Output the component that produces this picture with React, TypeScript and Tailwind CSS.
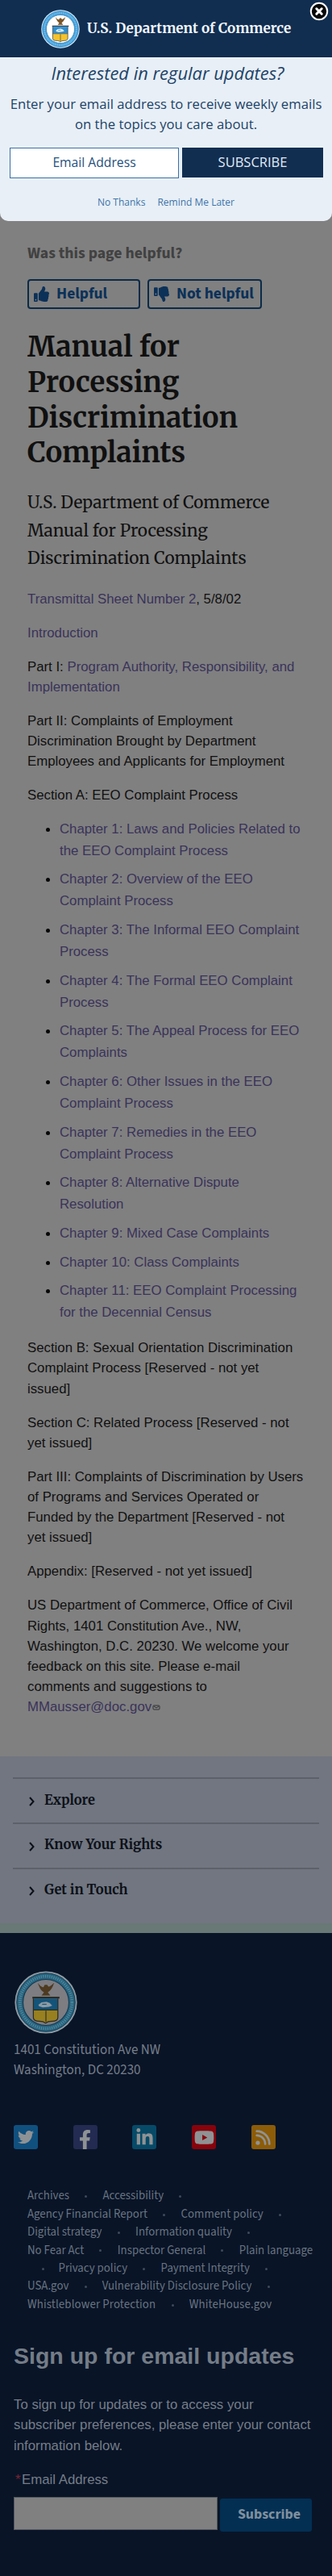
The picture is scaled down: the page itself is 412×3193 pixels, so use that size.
import type { ReactNode } from "react";
import { FaFacebookF, FaThumbsDown, FaThumbsUp, FaTwitter } from "react-icons/fa";
import { FaLinkedinIn, FaRss, FaYoutube } from "react-icons/fa6";

function Seal({ className, dim = false }: { className: string; dim?: boolean }) {
  const paper = dim ? "#7d7d82" : "#ffffff";
  const ring = dim ? "#26647f" : "#3f9fdc";
  const rim = dim ? "#8f9ba3" : "#d8effb";
  const line = dim ? "#14384f" : "#2474ad";
  const letters = dim ? "#76a3b4" : "#c3e6f8";
  const bird = dim ? "#4d3a20" : "#7a5528";
  const blue = dim ? "#14547a" : "#2d8fd0";
  const gold = dim ? "#988020" : "#f5c32c";
  const dark = dim ? "#2a2c26" : "#3a4450";
  return (
    <svg viewBox="0 0 100 100" className={className} aria-label="Department of Commerce seal">
      <circle cx="50" cy="50" r="49.5" fill={rim} />
      <circle cx="50" cy="50" r="46.5" fill={ring} stroke={line} strokeWidth="1.2" />
      <circle cx="50" cy="50" r="41.5" fill="none" stroke={letters} strokeWidth="4.5" strokeDasharray="1.6 1.8" opacity="0.55" />
      <circle cx="50" cy="50" r="36.5" fill={paper} stroke={line} strokeWidth="1.4" />
      <path
        d="M37 19c3 9 6 13 10 15l-4 5h14l-4-5c5-3 8-8 10-15-4 4-7 6-9 6l-2-3-4 0-2 4c-3 0-6-3-9-7z"
        fill={bird}
      />
      <rect x="28.5" y="41" width="43" height="3" fill={dark} />
      <path d="M30 44h39v18H30z" fill={blue} />
      <path d="M30 62h39v12c0 5-5 6-10 6-4 0-7 1-9.5 3-2.5-2-5-3-9.5-3-5 0-10-1-10-6z" fill={gold} />
      <path d="M30 44v30c0 5 5 6 10 6 4.5 0 7 1 9.5 3 2.500-2 5.5-3 9.5-3 5 0 10-1 10-6V44" fill="none" stroke={dark} strokeWidth="1.6" />
      <path d="M30 62h39M50 63v18" stroke={dark} strokeWidth="1.4" />
      <path d="M38 54l5-4 8-1 5 2 4 4-5 2-10 1-6-2z" fill={rim} />
      <path d="M44 53h7" stroke={blue} strokeWidth="1.5" />
    </svg>
  );
}

function Link({ children }: { children: ReactNode }) {
  return <a className="text-[#3a335a]">{children}</a>;
}

const chapters: string[][] = [
  ["Chapter 1: Laws and Policies Related to", "the EEO Complaint Process"],
  ["Chapter 2: Overview of the EEO", "Complaint Process"],
  ["Chapter 3: The Informal EEO Complaint", "Process"],
  ["Chapter 4: The Formal EEO Complaint", "Process"],
  ["Chapter 5: The Appeal Process for EEO", "Complaints"],
  ["Chapter 6: Other Issues in the EEO", "Complaint Process"],
  ["Chapter 7: Remedies in the EEO", "Complaint Process"],
  ["Chapter 8: Alternative Dispute", "Resolution"],
  ["Chapter 9: Mixed Case Complaints"],
  ["Chapter 10: Class Complaints"],
  ["Chapter 11: EEO Complaint Processing", "for the Decennial Census"],
];

/* An empty entry stands for a row that opens with its separator. */
const footerRows: string[][] = [
  ["Archives", "Accessibility"],
  ["Agency Financial Report", "Comment policy"],
  ["Digital strategy", "Information quality"],
  ["No Fear Act", "Inspector General", "Plain language"],
  ["", "Privacy policy", "Payment Integrity"],
  ["USA.gov", "Vulnerability Disclosure Policy"],
  ["Whistleblower Protection", "WhiteHouse.gov"],
];
const rowsWithoutTail = [3, 6];

function Lines({ lines }: { lines: string[] }) {
  return (
    <>
      {lines.map((line) => (
        <span key={line} className="block whitespace-nowrap">
          {line}
        </span>
      ))}
    </>
  );
}

function Separator({ first = false }: { first?: boolean }) {
  return (
    <span className={first ? "flex w-[38.5px] items-center justify-center" : "flex w-[41.5px] items-center justify-center"}>
      <span className="size-[3px] rounded-full bg-[#3e4b5c]" />
    </span>
  );
}

function SubscribeModal() {
  return (
    <section className="h-[203px] rounded-b-[10px] bg-[#e8eff6] text-center font-['Open_Sans','Noto_Sans',sans-serif] text-[#1d4368]">
      <h2 className="pt-[4px] pl-1 text-[21.9px] leading-[32px] whitespace-nowrap italic">Interested in regular updates?</h2>
      <p className="pt-[9px] text-[16.7px] leading-[25.3px]">
        <span className="block whitespace-nowrap">Enter your email address to receive weekly emails</span>
        <span className="block">on the topics you care about.</span>
      </p>
      <div className="flex gap-1 pt-4 pl-3">
        <div className="flex h-[38px] w-[210px] items-center justify-center border border-[#3a70a5] bg-white text-[15.7px] text-[#24507c]">
          Email Address
        </div>
        <button className="h-[37px] w-[175px] bg-[#112e51] text-[16.5px] text-[#e3ebf5]">SUBSCRIBE</button>
      </div>
      <div className="flex justify-center gap-[15px] pt-[21px] text-[12px] leading-[18px] text-[#3d74a9]">
        <a>No Thanks</a>
        <a>Remind Me Later</a>
      </div>
    </section>
  );
}

function Header() {
  return (
    <header className="relative flex h-[71px] border-b border-[#0b2747] bg-[#112e51] pt-3 pl-[51px]">
      <Seal className="size-[48px]" />
      <span className="pl-[9px] font-['Merriweather','Noto_Serif',serif] text-[17.1px] leading-[47px] font-bold whitespace-nowrap text-[#f0f5fa]">
        U.S. Department of Commerce
      </span>
      <svg viewBox="0 0 24 24" className="absolute top-[2px] right-[4px] size-6" aria-label="Close">
        <circle cx="12" cy="12" r="10.2" fill="#080808" stroke="#fff" strokeWidth="2" />
        <path d="M8.800 8.800l6.400 6.400M15.200 8.800l-6.400 6.400" stroke="#fff" strokeWidth="3" strokeLinecap="round" />
      </svg>
    </header>
  );
}

function Feedback() {
  const button =
    "flex h-[37px] items-center gap-[9px] rounded-[4px] border-2 border-[#0b2b48] pl-[6px] text-[19.5px] text-[#0b3158]";
  return (
    <div className="pt-[28px] pl-[34px] font-['Source_Sans_3','Noto_Sans_CJK_SC',sans-serif] font-bold whitespace-nowrap">
      <p className="text-[19.7px] leading-6 text-[#414141]">Was this page helpful?</p>
      <div className="flex gap-[9px] pt-5">
        <button className={button + " w-[140px]"}>
          <FaThumbsUp className="size-[19px]" />
          Helpful
        </button>
        <button className={button + " w-[142px]"}>
          <FaThumbsDown className="size-[19px]" />
          Not helpful
        </button>
      </div>
    </div>
  );
}

function Article() {
  return (
    <article className="h-[1794px] pt-[25px] pl-[34px] font-['Liberation_Sans',sans-serif] text-[16.8px] leading-[25.2px] text-[#101010]">
      <h1 className="font-['Merriweather','Noto_Serif',serif] text-[34.7px] leading-[43.75px] font-bold">
        <Lines lines={["Manual for", "Processing", "Discrimination", "Complaints"]} />
      </h1>
      <h2 className="pt-[23px] font-['Merriweather','Noto_Serif',serif] text-[20.8px] leading-[34.5px]">
        <Lines lines={["U.S. Department of Commerce", "Manual for Processing", "Discrimination Complaints"]} />
      </h2>
      <div className="flex flex-col gap-[16.8px] pt-5">
        <p>
          <Link>Transmittal Sheet Number 2</Link>, 5/8/02
        </p>
        <p>
          <Link>Introduction</Link>
        </p>
        <p className="whitespace-nowrap">
          Part I: <Link>Program Authority, Responsibility, and<br />Implementation</Link>
        </p>
        <p>
          <Lines
            lines={[
              "Part II: Complaints of Employment",
              "Discrimination Brought by Department",
              "Employees and Applicants for Employment",
            ]}
          />
        </p>
        <p>Section A: EEO Complaint Process</p>
      </div>
      <ul className="flex flex-col gap-[8.9px] pt-[16.5px] pb-[17px] pl-[23px] leading-[26.88px]">
        {chapters.map((lines) => (
          <li key={lines[0]} className="flex gap-3">
            <span className="mt-[11px] size-[5px] rounded-full bg-[#080808]" />
            <a className="text-[#3a335a]">
              <Lines lines={lines} />
            </a>
          </li>
        ))}
      </ul>
      <div className="flex flex-col gap-[16.8px]">
        <p>
          <Lines
            lines={["Section B: Sexual Orientation Discrimination", "Complaint Process [Reserved - not yet", "issued]"]}
          />
        </p>
        <p>
          <Lines lines={["Section C: Related Process [Reserved - not", "yet issued]"]} />
        </p>
        <p>
          <Lines
            lines={[
              "Part III: Complaints of Discrimination by Users",
              "of Programs and Services Operated or",
              "Funded by the Department [Reserved - not",
              "yet issued]",
            ]}
          />
        </p>
        <p>Appendix: [Reserved - not yet issued]</p>
        <div>
          <Lines
            lines={[
              "US Department of Commerce, Office of Civil",
              "Rights, 1401 Constitution Ave., NW,",
              "Washington, D.C. 20230. We welcome your",
              "feedback on this site. Please e-mail",
              "comments and suggestions to",
            ]}
          />
          <a className="flex items-center text-[#3a335a]">
            MMausser@doc.gov
            <svg viewBox="0 0 10 7" className="ml-px h-[7px] w-[10px]" fill="none" stroke="#303036">
              <rect x="1" y="1" width="8" height="5" rx="1" />
              <path d="M2 2l3 2 3-2" />
            </svg>
          </a>
        </div>
      </div>
    </article>
  );
}

function Explore() {
  return (
    <nav className="h-[219px] border-b-[12px] border-[#697976] bg-[#717680] px-4 pt-[26px]">
      {["Explore", "Know Your Rights", "Get in Touch"].map((label) => (
        <div
          key={label}
          className="flex h-[55.8px] items-center gap-3 border-t-2 border-[#5c616a] pl-5 font-['Merriweather','Noto_Serif',serif] text-[16.5px] font-bold text-[#0c1018]"
        >
          <svg viewBox="0 0 7 12" className="mt-[2px] h-3 w-[7px]" fill="none" stroke="#0c1018" strokeWidth="2">
            <path d="M1 1l4.500 5L1 11" />
          </svg>
          {label}
        </div>
      ))}
    </nav>
  );
}

function SocialLinks() {
  const tile = "flex size-[30px] items-center justify-center rounded-[3px] text-[#8f9294]";
  return (
    <div className="flex gap-[43.7px] pt-[55px] pl-[17px]">
      <a className={tile + " bg-[#10507f]"}>
        <FaTwitter className="size-[20px]" />
      </a>
      <a className={tile + " items-end bg-[#232b52]"}>
        <FaFacebookF className="h-[24px] w-[17px]" />
      </a>
      <a className={tile + " bg-[#064a68]"}>
        <FaLinkedinIn className="size-[23px]" />
      </a>
      <a className={tile + " bg-[#87030c]"}>
        <FaYoutube className="size-[25px]" />
      </a>
      <a className={tile + " bg-[#8c5c08]"}>
        <FaRss className="size-[21px]" />
      </a>
    </div>
  );
}

function Footer() {
  return (
    <footer className="h-[797px] bg-[#091427] pt-[47px] text-[#757d87]">
      <Seal dim className="ml-[18px] size-[78px]" />
      <p className="pt-2 pl-[17px] font-['Source_Sans_3','Noto_Sans_CJK_SC',sans-serif] text-[17px] leading-[25.2px]">
        1401 Constitution Ave NW
        <br />
        Washington, DC 20230
      </p>
      <SocialLinks />
      <div className="pt-[47px] pl-[34px] font-['Source_Sans_3','Noto_Sans_CJK_SC',sans-serif] text-[14.85px] leading-[22.4px] whitespace-nowrap text-[#687380]">
        {footerRows.map((row, r) => (
          <div key={row.join()} className={r === 6 ? "flex tracking-[0.12px]" : "flex"}>
            {row.map((label, i) => (
              <span key={label} className="flex">
                {label}
                {(i < row.length - 1 || !rowsWithoutTail.includes(r)) && <Separator first={label === ""} />}
              </span>
            ))}
          </div>
        ))}
      </div>
      <form className="pt-[35px] pl-[17px] font-['Liberation_Sans',sans-serif] text-[16.8px] leading-[25.2px]">
        <h2 className="text-[28.5px] leading-[34px] font-bold whitespace-nowrap">Sign up for email updates</h2>
        <p className="pt-[31px]">
          <Lines
            lines={[
              "To sign up for updates or to access your",
              "subscriber preferences, please enter your contact",
              "information below.",
            ]}
          />
        </p>
        <label className="flex pt-[17px]">
          <span className="w-[10px] pl-[2px] text-[#7a2430]">*</span>Email Address
        </label>
        <div className="flex gap-[3px] pt-[8.5px]">
          <input className="h-[41px] w-[253px] border border-[#53585e] bg-[#808080]" />
          <button
            type="button"
            className="mt-[2px] h-[41px] w-[114px] rounded-[3px] bg-[#032f53] pl-2 font-['Source_Sans_3','Noto_Sans_CJK_SC',sans-serif] text-[17.9px] font-bold text-[#80909e]"
          >
            Subscribe
          </button>
        </div>
      </form>
    </footer>
  );
}

export default function App() {
  return (
    <main className="h-[3193px] w-full overflow-hidden bg-[#808080]">
      <Header />
      <SubscribeModal />
      <Feedback />
      <Article />
      <Explore />
      <Footer />
    </main>
  );
}
